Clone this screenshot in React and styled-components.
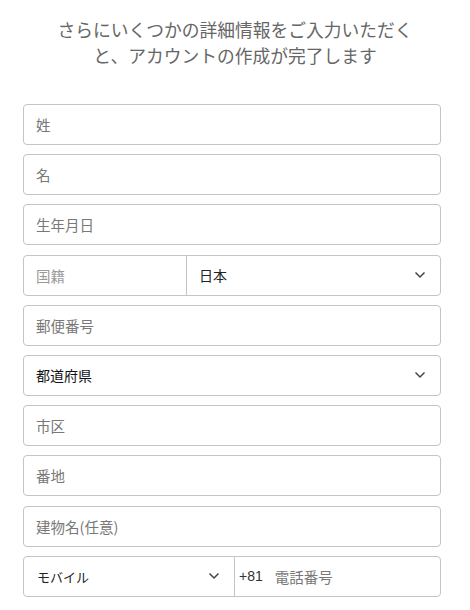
import styled, { createGlobalStyle } from "styled-components";

const GlobalStyle = createGlobalStyle`
  body {
    margin: 0;
    background: #fff;
    font-family: "Noto Sans CJK JP", "Noto Sans", sans-serif;
  }
`;

const Chevron = () => (
  <svg width="12" height="8" viewBox="0 0 12 8">
    <polyline points="1.5,1.5 6,6 10.5,1.5" fill="none" stroke="#444" strokeWidth="1.5" />
  </svg>
);

const App = () => {
  return (
    <Page>
      <GlobalStyle />
      <Title>
        さらにいくつかの詳細情報をご入力いただく
        <br />
        と、アカウントの作成が完了します
      </Title>
      <Form>
        <Field><Placeholder>姓</Placeholder></Field>
        <Field><Placeholder>名</Placeholder></Field>
        <Field><Placeholder>生年月日</Placeholder></Field>
        <Field $split>
          <Part $width="162px"><Placeholder $light>国籍</Placeholder></Part>
          <Part $grow $divider>
            <Value>日本</Value>
            <Chevron />
          </Part>
        </Field>
        <Field><Placeholder>郵便番号</Placeholder></Field>
        <Field>
          <Value $dark>都道府県</Value>
          <Arrow><Chevron /></Arrow>
        </Field>
        <Field><Placeholder>市区</Placeholder></Field>
        <Field><Placeholder>番地</Placeholder></Field>
        <Field><Placeholder>建物名(任意)</Placeholder></Field>
        <Field $split>
          <Part $width="210px" $pad="0 14px 0 13px">
            <Value $small>モバイル</Value>
            <Chevron />
          </Part>
          <Part $grow $divider $start $pad="0 4px">
            <Code>+81</Code>
            <Placeholder>電話番号</Placeholder>
          </Part>
        </Field>
      </Form>
    </Page>
  );
};

const Page = styled.div`
  width: 470px;
  padding-top: 16px;
`;

const Title = styled.h1`
  margin: 0 0 36px;
  text-align: center;
  font-size: 17.75px;
  font-weight: 400;
  line-height: 26px;
  color: #666;
`;

const Form = styled.div`
  display: flex;
  flex-direction: column;
  gap: 9.2px;
  padding: 0 29px 0 23px;
`;

const Field = styled.div`
  height: 41px;
  box-sizing: border-box;
  display: flex;
  align-items: center;
  border: 1px solid #c4c4c4;
  border-radius: 4px;
  padding: ${(p) => (p.$split ? "0" : "0 12px")};
`;

const Part = styled.div`
  height: 100%;
  display: flex;
  align-items: center;
  justify-content: ${(p) => (p.$start ? "flex-start" : "space-between")};
  box-sizing: border-box;
  padding: ${(p) => p.$pad || "0 14px 0 12px"};
  width: ${(p) => p.$width || "auto"};
  flex: ${(p) => (p.$grow ? "1" : "none")};
  border-left: ${(p) => (p.$divider ? "1px solid #c4c4c4" : "none")};
`;

const Placeholder = styled.span`
  font-size: 14.5px;
  color: ${(p) => (p.$light ? "#9a9a9a" : "#787878")};
`;

const Value = styled.span`
  font-size: ${(p) => (p.$small ? "13px" : "14px")};
  color: ${(p) => (p.$dark ? "#111" : "#222")};
`;

const Arrow = styled.span`
  margin-left: auto;
  margin-right: 2px;
  display: flex;
`;

const Code = styled.span`
  font-family: "Liberation Sans", Arial, sans-serif;
  font-size: 14px;
  color: #333;
  margin-right: 12px;
`;

export default App;
